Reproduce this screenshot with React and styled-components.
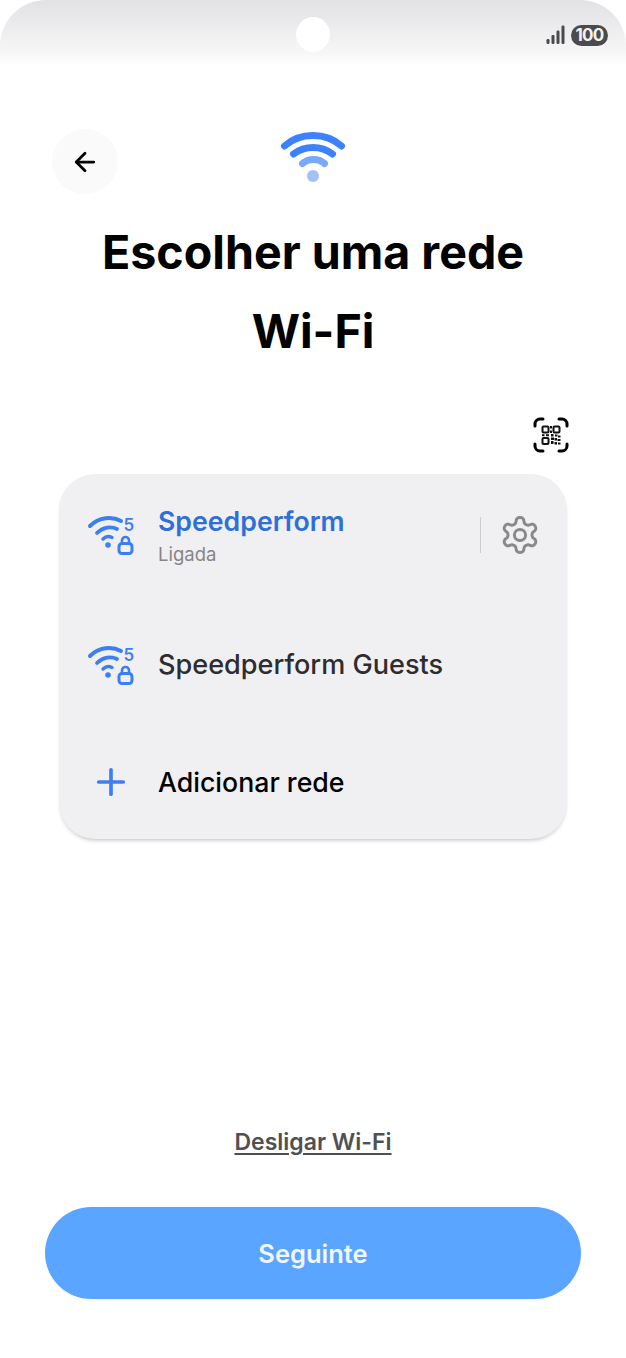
import styled, { createGlobalStyle } from 'styled-components';
import { ArrowLeft, Plus } from 'lucide-react';

const GlobalStyle = createGlobalStyle`
  html, body {
    margin: 0;
    padding: 0;
    background: #fff;
  }
  * {
    box-sizing: border-box;
  }
`;

const Screen = styled.div`
  width: 626px;
  height: 1358px;
  display: flex;
  flex-direction: column;
  background: #fff;
  font-family: Inter, "Noto Sans", sans-serif;
  overflow: hidden;
`;

const StatusBar = styled.div`
  position: relative;
  height: 66px;
  flex: none;
  display: flex;
  align-items: center;
  justify-content: flex-end;
  gap: 6px;
  padding: 4px 18px 0 0;
  border-radius: 46px 46px 0 0;
  background: linear-gradient(180deg, #e2e2e5 0%, #e9e9eb 30%, #f6f6f7 78%, #ffffff 100%);
`;

const CameraHole = styled.div`
  position: absolute;
  left: 296px;
  top: 17px;
  width: 34px;
  height: 35px;
  border-radius: 50%;
  background: #fff;
`;

const Battery = styled.div`
  width: 37px;
  height: 21px;
  border-radius: 11px;
  background: #4b4b4d;
  color: #f2f2f2;
  font-size: 17px;
  font-weight: 700;
  line-height: 21px;
  text-align: center;
  letter-spacing: -0.8px;
`;

const Header = styled.header`
  display: grid;
  grid-template-columns: 66px 1fr 66px;
  align-items: start;
  padding: 63px 52px 0;
  height: 153px;
`;

const BackButton = styled.button`
  width: 66px;
  height: 65px;
  display: flex;
  align-items: center;
  justify-content: center;
  border: 0;
  border-radius: 50%;
  background: #fafafa;
  color: #000;
  padding: 0;
`;

const HeroIcon = styled.div`
  display: flex;
  justify-content: center;
  padding-top: 1px;
`;

const Title = styled.h1`
  margin: -6px 0 0;
  font-size: 46.6px;
  line-height: 79px;
  font-weight: 700;
  color: #000;
  text-align: center;
`;

const ScanRow = styled.div`
  display: flex;
  justify-content: flex-end;
  padding: 46px 57px 0 0;
`;

const Card = styled.section`
  margin: 21px 59px 0;
  height: 365px;
  border-radius: 36px;
  background: #f0f0f3;
  box-shadow: 0 3px 4px -2px rgba(0, 0, 0, 0.26);
  display: flex;
  flex-direction: column;
`;

const NetworkRow = styled.div`
  height: ${props => props.$height}px;
  flex: none;
  display: flex;
  align-items: center;
  padding: 0 26px 0 28px;
`;

const IconSlot = styled.div`
  width: 72px;
  margin-right: -1px;
  flex: none;
  display: flex;
  align-items: center;
  justify-content: ${props => props.$center ? 'center' : 'flex-start'};
  padding-right: ${props => props.$center ? 24 : 0}px;
`;

const NetworkText = styled.div`
  flex: 1;
  display: flex;
  flex-direction: column;
`;

const NetworkName = styled.div`
  font-size: ${props => props.$size || 26.7}px;
  line-height: 32px;
  font-weight: ${props => props.$weight || 500};
  color: ${props => props.$color};
`;

const NetworkStatus = styled.div`
  font-size: 18.5px;
  line-height: 22px;
  color: #858587;
  margin-top: 6px;
`;

const Divider = styled.div`
  width: 1px;
  height: 36px;
  background: #cdcdd0;
  margin-right: 18px;
`;

const Footer = styled.footer`
  margin-top: auto;
  padding: 0 45px 59px;
  display: flex;
  flex-direction: column;
  align-items: center;
`;

const TextLink = styled.a`
  font-size: 23px;
  line-height: 30px;
  font-weight: 600;
  color: #505052;
  text-decoration: underline;
  text-underline-offset: 3px;
  margin-bottom: 50px;
`;

const NextButton = styled.button`
  width: 100%;
  height: 92px;
  border: 0;
  border-radius: 46px;
  background: #5aa5ff;
  color: #f1f7ff;
  font-family: inherit;
  font-size: 25.5px;
  font-weight: 600;
`;

const SignalIcon = () => (
  <svg width="19" height="20" viewBox="0 0 19 20" fill="#4b4b4d">
    <rect x="0.5" y="14" width="3" height="5" rx="1.2" />
    <rect x="5.5" y="10" width="3" height="9" rx="1.2" />
    <rect x="10.5" y="5.5" width="3" height="13.5" rx="1.2" />
    <rect x="15.5" y="0.5" width="3" height="18.5" rx="1.2" />
  </svg>
);

const WifiHero = () => (
  <svg width="66" height="54" viewBox="0 0 66 54" fill="none" strokeLinecap="round">
    <path d="M4.5 16 C 20 2, 46 2, 61.5 16" stroke="#3d82fb" strokeWidth="7" />
    <path d="M13.5 24 C 25 15.3, 41 15.3, 52.5 24" stroke="#3d82fb" strokeWidth="7" />
    <path d="M22.5 33.5 C 28 28, 39 28, 44.5 33.5" stroke="#7aa9fb" strokeWidth="7" />
    <ellipse cx="33" cy="46" rx="6" ry="6" fill="#a5c1f4" />
  </svg>
);

const WifiLock = () => (
  <svg width="48" height="44" viewBox="0 0 48 44" fill="none" strokeLinecap="round">
    <path d="M3 13 C 12 4, 25 3, 34 8" stroke="#3d7ff0" strokeWidth="4" />
    <path d="M10 20 C 16 14, 24 13, 30 16" stroke="#3d7ff0" strokeWidth="3.8" />
    <path d="M16 26 C 18.5 23.5, 22 23, 25 24.5" stroke="#3d7ff0" strokeWidth="3.4" />
    <circle cx="21" cy="32" r="2.8" fill="#3d7ff0" />
    <text x="36.5" y="18" fontFamily="Inter, sans-serif" fontSize="17" fontWeight="600" fill="#3d7ff0">5</text>
    <rect x="32" y="30.5" width="13" height="10" rx="3" stroke="#3d7ff0" strokeWidth="3" />
    <path d="M35 30 V27.5 a3.5 3.5 0 0 1 7 0 V30" stroke="#3d7ff0" strokeWidth="2.6" />
  </svg>
);

const QrScan = () => (
  <svg width="36" height="36" viewBox="0 0 36 36" fill="none">
    <g stroke="#000" strokeWidth="3" strokeLinecap="round">
      <path d="M2 9 V7 a5 5 0 0 1 5 -5 H10" />
      <path d="M26 2 H29 a5 5 0 0 1 5 5 V9" />
      <path d="M2 27 V29 a5 5 0 0 0 5 5 H10" />
      <path d="M26 34 H29 a5 5 0 0 0 5 -5 V27" />
    </g>
    <g stroke="#111" strokeWidth="2">
      <rect x="9.5" y="9.5" width="6" height="6" rx="1" />
      <rect x="20.5" y="9.5" width="6" height="6" rx="1" />
      <rect x="9.5" y="21" width="6" height="6" rx="1" />
    </g>
    <g fill="#111">
      <rect x="17" y="9" width="2" height="2.5" />
      <rect x="17" y="13.5" width="2" height="2.5" />
      <rect x="9" y="17.2" width="2.5" height="2" />
      <rect x="13" y="17.2" width="3" height="2" />
      <rect x="18" y="17" width="2.5" height="2.5" />
      <rect x="22" y="17.5" width="2.5" height="2" />
      <rect x="25" y="18.5" width="2.5" height="2" />
      <rect x="18" y="20.5" width="3" height="2.5" />
      <rect x="21.5" y="21" width="2.5" height="2.5" />
      <rect x="24.5" y="22" width="3" height="2" />
      <rect x="18" y="24" width="2.5" height="3" />
      <rect x="21.5" y="25" width="2.5" height="2.5" />
      <rect x="25" y="25.5" width="2.5" height="2" />
    </g>
  </svg>
);

const GearIcon = () => (
  <svg width="42" height="42" viewBox="0 0 24 24" fill="none" stroke="#89898c" strokeWidth="1.7" strokeLinejoin="round">
    <path d="M12.22 2h-.44a2 2 0 0 0-2 2v.18a2 2 0 0 1-1 1.73l-.43.25a2 2 0 0 1-2 0l-.15-.08a2 2 0 0 0-2.73.73l-.22.38a2 2 0 0 0 .73 2.73l.15.1a2 2 0 0 1 1 1.72v.51a2 2 0 0 1-1 1.74l-.15.09a2 2 0 0 0-.73 2.73l.22.38a2 2 0 0 0 2.73.73l.15-.08a2 2 0 0 1 2 0l.43.25a2 2 0 0 1 1 1.73V20a2 2 0 0 0 2 2h.44a2 2 0 0 0 2-2v-.18a2 2 0 0 1 1-1.73l.43-.25a2 2 0 0 1 2 0l.15.08a2 2 0 0 0 2.73-.73l.22-.39a2 2 0 0 0-.73-2.73l-.15-.08a2 2 0 0 1-1-1.74v-.5a2 2 0 0 1 1-1.74l.15-.09a2 2 0 0 0 .73-2.73l-.22-.38a2 2 0 0 0-2.73-.73l-.15.08a2 2 0 0 1-2 0l-.43-.25a2 2 0 0 1-1-1.73V4a2 2 0 0 0-2-2z" />
    <circle cx="12" cy="12" r="3.2" />
  </svg>
);

const App = () => {
  return (
    <Screen>
      <GlobalStyle />
      <StatusBar>
        <CameraHole />
        <SignalIcon />
        <Battery>100</Battery>
      </StatusBar>

      <Header>
        <BackButton aria-label="Voltar">
          <ArrowLeft size={30} strokeWidth={2.2} />
        </BackButton>
        <HeroIcon>
          <WifiHero />
        </HeroIcon>
      </Header>

      <Title>
        Escolher uma rede
        <br />
        Wi-Fi
      </Title>

      <ScanRow>
        <QrScan />
      </ScanRow>

      <Card>
        <NetworkRow $height={122}>
          <IconSlot>
            <WifiLock />
          </IconSlot>
          <NetworkText>
            <NetworkName $color="#2f6fd8" $weight={600}>Speedperform</NetworkName>
            <NetworkStatus>Ligada</NetworkStatus>
          </NetworkText>
          <Divider />
          <GearIcon />
        </NetworkRow>
        <NetworkRow $height={138}>
          <IconSlot>
            <WifiLock />
          </IconSlot>
          <NetworkText>
            <NetworkName $color="#2d2d2f" $size={27.1}>Speedperform Guests</NetworkName>
          </NetworkText>
        </NetworkRow>
        <NetworkRow $height={95}>
          <IconSlot $center>
            <Plus size={42} color="#3d7ff0" strokeWidth={2.1} />
          </IconSlot>
          <NetworkText>
            <NetworkName $color="#000">Adicionar rede</NetworkName>
          </NetworkText>
        </NetworkRow>
      </Card>

      <Footer>
        <TextLink>Desligar Wi-Fi</TextLink>
        <NextButton>Seguinte</NextButton>
      </Footer>
    </Screen>
  );
};

export default App;
